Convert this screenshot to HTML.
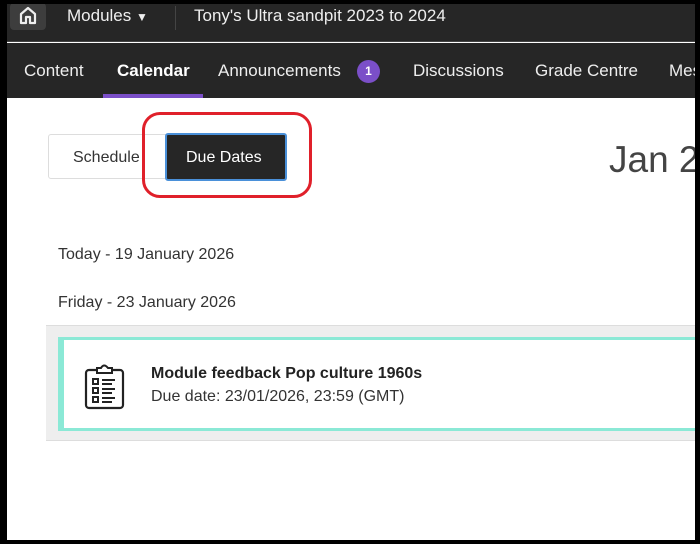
<!DOCTYPE html>
<html><head><style>
*{margin:0;padding:0;box-sizing:border-box}
body{width:700px;height:544px;overflow:hidden;background:#000;font-family:"Liberation Sans",sans-serif;position:relative}
.page{position:absolute;left:7px;top:4px;width:688px;height:536px;background:#fff;overflow:hidden}
.top{position:absolute;left:0;top:0;width:688px;height:38px;background:#262626;border-bottom:1px solid #444}
.nav{position:absolute;left:0;top:39px;width:688px;height:55px;background:#262626}
.t{position:absolute;color:#eee;font-size:17px;white-space:nowrap}
.nav .t{top:18px}
</style></head><body>
<div class="page">
<div class="top">
 <div style="position:absolute;left:3px;top:-1px;width:36px;height:27px;background:#3d3d3d;border-radius:4px"></div>
 <svg style="position:absolute;left:12px;top:2px" width="18" height="19" viewBox="0 0 18 19"><path d="M2 8 L9 2 L16 8 V17 H11 V11 H7 V17 H2 Z" fill="none" stroke="#eee" stroke-width="2.2" stroke-linejoin="round"/></svg>
 <div class="t" style="left:60px;top:2px">Modules <span style="font-size:12px">▼</span></div>
 <div style="position:absolute;left:168px;top:2px;width:1px;height:24px;background:#444"></div>
 <div class="t" style="left:187px;top:2px">Tony's Ultra sandpit 2023 to 2024</div>
</div>
<div class="nav">
 <div class="t" style="left:17px">Content</div>
 <div class="t" style="left:110px;font-weight:bold;color:#fff">Calendar</div>
 <div style="position:absolute;left:96px;top:51px;width:100px;height:4px;background:#7b4fc8"></div>
 <div class="t" style="left:211px">Announcements</div>
 <div style="position:absolute;left:350px;top:17px;width:23px;height:23px;border-radius:50%;background:#7b4fc8;color:#fff;font-size:12px;font-weight:bold;text-align:center;line-height:23px">1</div>
 <div class="t" style="left:406px">Discussions</div>
 <div class="t" style="left:528px">Grade Centre</div>
 <div class="t" style="left:662px">Mes</div>
</div>
<div style="position:absolute;left:41px;top:130px;width:120px;height:45px;border:1px solid #ddd;border-radius:3px;font-size:16px;color:#333;padding:14px 0 0 24px">Schedule</div>
<div style="position:absolute;left:158px;top:129px;width:122px;height:48px;background:#262626;border:2px solid #4a90d9;border-radius:3px;font-size:16px;color:#fff;padding:14px 0 0 19px">Due Dates</div>
<div style="position:absolute;left:135px;top:108px;width:170px;height:86px;border:3px solid #e0202a;border-radius:18px"></div>
<div style="position:absolute;left:602px;top:135px;font-size:37px;color:#444;white-space:nowrap">Jan 20</div>
<div style="position:absolute;left:51px;top:242px;font-size:16px;color:#333">Today - 19 January 2026</div>
<div style="position:absolute;left:51px;top:290px;font-size:16px;color:#333">Friday - 23 January 2026</div>
<div style="position:absolute;left:39px;top:321px;width:660px;height:116px;background:#eee;border-top:1px solid #ddd;border-bottom:1px solid #ddd"></div>
<div style="position:absolute;left:51px;top:333px;width:650px;height:94px;background:#fff;border:3px solid #8be9d6;border-left-width:6px"></div>
<svg style="position:absolute;left:76px;top:359px" width="44" height="48" viewBox="0 0 44 48"><rect x="3" y="7" width="37" height="38" rx="3" fill="none" stroke="#222" stroke-width="2.2"/><path d="M14 10 V5 H18 Q21 0 25 5 H29 V10 Z" fill="#fff" stroke="#222" stroke-width="2"/><g fill="none" stroke="#222" stroke-width="2"><rect x="10" y="16" width="5" height="5"/><rect x="10" y="25" width="5" height="5"/><rect x="10" y="34" width="5" height="5"/><path d="M19 17H32M19 21H29M19 26H32M19 30H29M19 35H32M19 39H29"/></g></svg>
<div style="position:absolute;left:144px;top:361px;font-size:16px;color:#222;font-weight:bold">Module feedback Pop culture 1960s</div>
<div style="position:absolute;left:144px;top:384px;font-size:16px;color:#333">Due date: 23/01/2026, 23:59 (GMT)</div>
</div>
</body></html>
